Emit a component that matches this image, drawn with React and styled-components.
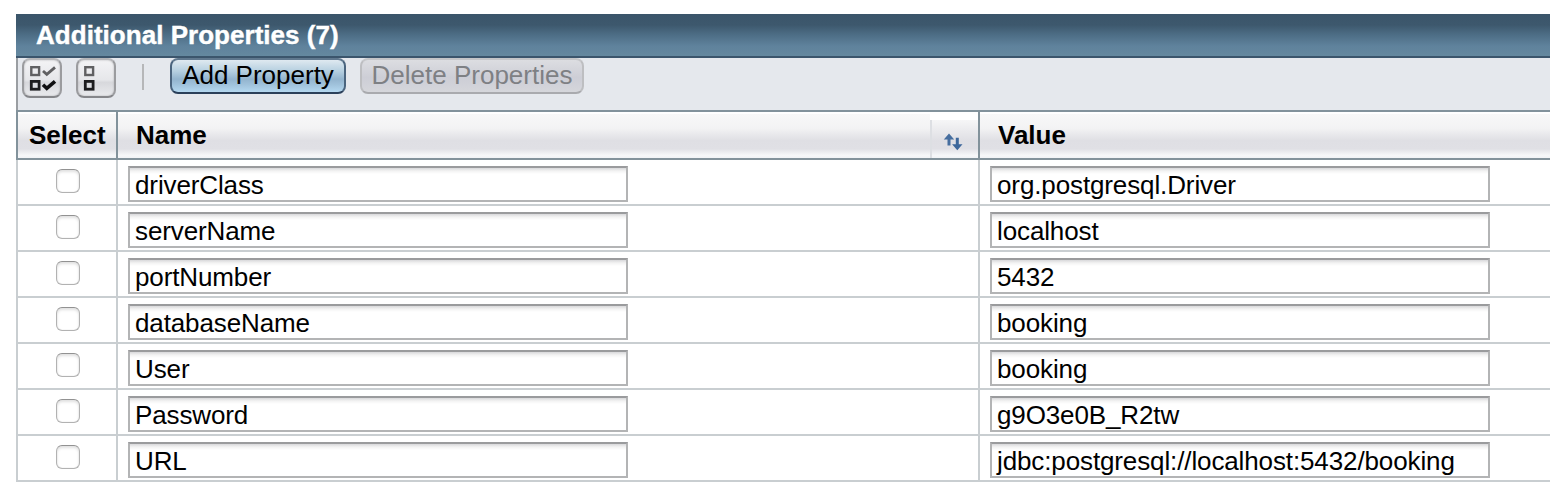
import React from "react";
import styled, { createGlobalStyle } from "styled-components";

const GlobalStyle = createGlobalStyle`
  body {
    margin: 0;
    background: #fff;
    overflow: hidden;
    font-family: "Liberation Sans", Arial, sans-serif;
    font-size: 26px;
    color: #000;
  }
  * { box-sizing: border-box; }
`;

const Panel = styled.section`
  margin: 14px 0 0 16px;
`;

const TitleBar = styled.h2`
  margin: 0;
  height: 44px;
  padding-left: 20px;
  border-bottom: 2px solid #3b556c;
  background: linear-gradient(#3b556a 0%, #3d586d 26%, #4c6c84 48%, #5f829c 76%, #64889f 100%);
  color: #fff;
  font-size: 26px;
  font-weight: bold;
  line-height: 42px;
  letter-spacing: 0.03px;
  -webkit-text-stroke: 0.4px #fff;
`;

const Toolbar = styled.div`
  display: flex;
  align-items: flex-start;
  height: 52px;
  padding-left: 4px;
  border-left: 2px solid #9a9ea2;
  background: #e5e8ed;
`;

const IconButton = styled.span`
  display: block;
  width: 40px;
  height: 40px;
  margin-right: 14px;
  border: 2px solid #9b9c9f;
  border-top-color: #b5b6b9;
  border-bottom-color: #85868a;
  border-radius: 8px;
  background: linear-gradient(#f3f3f5, #e6e7ea 55%, #d7d8dc 62%, #e9eaed);
  box-shadow: inset 0 0 2px #aaabae;
  svg { display: block; }
`;

const Divider = styled.span`
  width: 2px;
  height: 26px;
  margin: 6px 26px 0 12px;
  background: #b6b7b9;
`;

const Button = styled.span`
  height: 36px;
  width: ${(p) => p.$width}px;
  margin-right: 14px;
  border: 2px solid;
  border-color: ${(p) => (p.$disabled ? "#c5c6c9 #bdbec1 #a9aaae" : "#60788e #4a647e #2b405a")};
  border-radius: 8px;
  background: ${(p) =>
    p.$disabled
      ? "linear-gradient(#dcdde1, #cdced6 55%, #d5d6db)"
      : "linear-gradient(#dfe9f0 0%, #b5cfe0 35%, #93b4ce 60%, #a1c3dc 78%, #b4d8f0 100%)"};
  color: ${(p) => (p.$disabled ? "#7e8084" : "#000")};
  line-height: 30px;
  text-align: center;
  white-space: nowrap;
`;

const columns = "100px 862px 1fr";

const Header = styled.div`
  display: grid;
  grid-template-columns: ${columns};
  height: 50px;
  border: solid #82929b;
  border-width: 2px 0;
  font-weight: bold;
  line-height: 46px;
`;

const HeadCell = styled.div`
  display: flex;
  justify-content: space-between;
  border-left: 2px solid #82929b;
  padding-left: ${(p) => p.$pad}px;
  background: linear-gradient(#fff 0, #fff 2px, #f8f8f8 2px, #f3f3f4 35%, #dfdfe4 62%, #e0e0e5 80%, #f6f7f9 94%, #f1f3f6 100%);
`;

const SortButton = styled.span`
  width: 48px;
  height: 38px;
  margin-top: 8px;
  border-left: 2px solid #dddfe3;
  background: linear-gradient(#f6f6f7, #dfdfe4 55%, #e0e0e5 75%, #f6f7f9 93%, #f1f3f6);
  box-shadow: 0 -6px 0 #fff;
  svg { display: block; }
`;

const Row = styled.div`
  display: grid;
  grid-template-columns: ${columns};
  height: 46px;
  border-bottom: 2px solid #c9ced1;
`;

const Cell = styled.div`
  border-left: 2px solid #c9ced1;
  padding: ${(p) => (p.$check ? "9px 0 0 38px" : "6px 0 0 10px")};
`;

const Checkbox = styled.span`
  display: block;
  width: 24px;
  height: 24px;
  border: 1px solid #b2b2b2;
  border-top-color: #929292;
  border-radius: 6px;
  box-shadow: inset 0 2px 3px #e0e0e0, inset 0 0 1px #c4c4c4;
`;

const Field = styled.div`
  width: 500px;
  height: 36px;
  padding-left: 5px;
  border: 2px solid #b3b4b5;
  border-top-color: #9a9b9d;
  background: linear-gradient(#d8d8da, #f3f3f3 3px, #fff 6px);
  line-height: 35px;
  letter-spacing: -0.12px;
  white-space: nowrap;
`;

const properties = [
  ["driverClass", "org.postgresql.Driver"],
  ["serverName", "localhost"],
  ["portNumber", "5432"],
  ["databaseName", "booking"],
  ["User", "booking"],
  ["Password", "g9O3e0B_R2tw"],
  ["URL", "jdbc:postgresql://localhost:5432/booking"],
];

const Boxes = () => (
  <>
    <rect x="7.3" y="7.2" width="7.8" height="7.8" stroke="#606062" strokeWidth="2.4" />
    <rect x="7.3" y="21.4" width="7.8" height="7.8" stroke="#1c1c1e" strokeWidth="2.8" />
  </>
);

const SelectAllIcon = () => (
  <svg width="36" height="36" viewBox="0 0 36 36" fill="none">
    <Boxes />
    <path d="M19 11l3.8 3.4L31 7.4" stroke="#606062" strokeWidth="2.8" />
    <path d="M19 24.8l3.8 3.6L31 21.4" stroke="#101012" strokeWidth="3.6" />
  </svg>
);

const DeselectAllIcon = () => (
  <svg width="36" height="36" viewBox="0 0 36 36" fill="none">
    <Boxes />
  </svg>
);

const SortIcon = () => (
  <svg width="46" height="38" viewBox="0 0 46 38">
    <path d="M17 13.5l5.2 6h-3.7v6h-3v-6h-3.7z" fill="#466e9f" />
    <path d="M25.3 30.3l5.2-6h-3.7v-6.5h-3v6.5h-3.7z" fill="#3d679b" />
  </svg>
);

export default function App() {
  return (
    <>
      <GlobalStyle />
      <Panel>
        <TitleBar>Additional Properties (7)</TitleBar>
        <Toolbar>
          <IconButton><SelectAllIcon /></IconButton>
          <IconButton><DeselectAllIcon /></IconButton>
          <Divider />
          <Button $width={176}>Add Property</Button>
          <Button $width={224} $disabled>Delete Properties</Button>
        </Toolbar>
        <Header>
          <HeadCell $pad={11}>Select</HeadCell>
          <HeadCell $pad={18}>
            Name
            <SortButton><SortIcon /></SortButton>
          </HeadCell>
          <HeadCell $pad={18}>Value</HeadCell>
        </Header>
        {properties.map(([name, value]) => (
          <Row key={name}>
            <Cell $check><Checkbox /></Cell>
            <Cell><Field>{name}</Field></Cell>
            <Cell><Field>{value}</Field></Cell>
          </Row>
        ))}
      </Panel>
    </>
  );
}
